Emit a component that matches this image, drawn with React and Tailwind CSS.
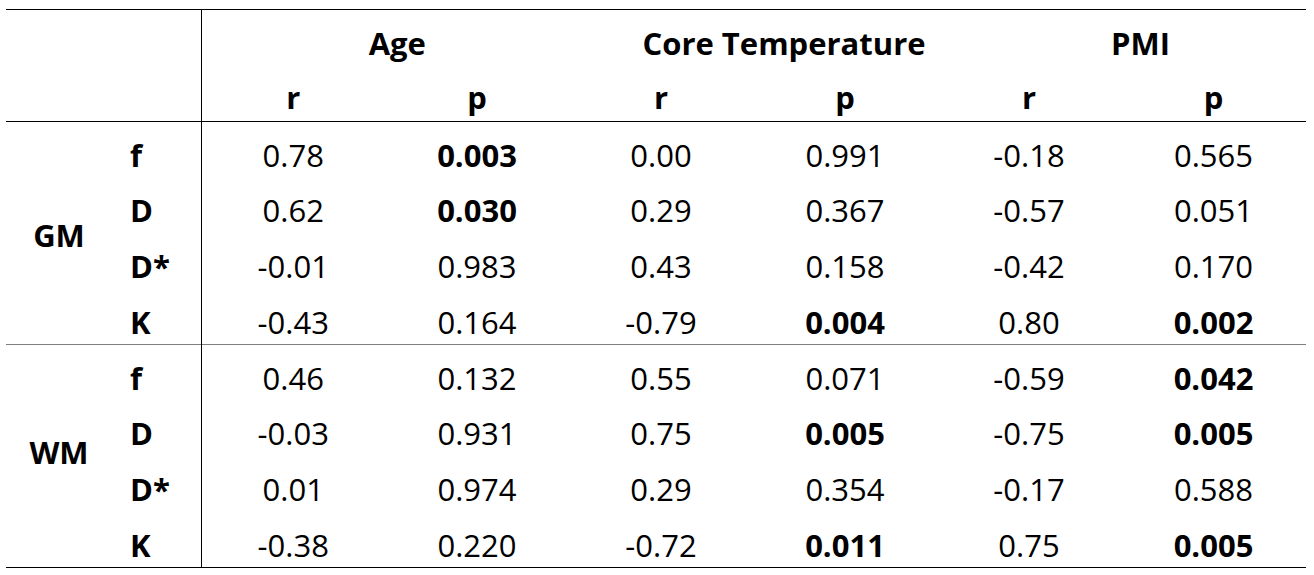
const groups = [
  {
    name: 'GM',
    rows: [
      { label: 'f', cells: [['0.78'], ['0.003', true], ['0.00'], ['0.991'], ['-0.18'], ['0.565']] },
      { label: 'D', cells: [['0.62'], ['0.030', true], ['0.29'], ['0.367'], ['-0.57'], ['0.051']] },
      { label: 'D*', cells: [['-0.01'], ['0.983'], ['0.43'], ['0.158'], ['-0.42'], ['0.170']] },
      { label: 'K', cells: [['-0.43'], ['0.164'], ['-0.79'], ['0.004', true], ['0.80'], ['0.002', true]] },
    ],
  },
  {
    name: 'WM',
    rows: [
      { label: 'f', cells: [['0.46'], ['0.132'], ['0.55'], ['0.071'], ['-0.59'], ['0.042', true]] },
      { label: 'D', cells: [['-0.03'], ['0.931'], ['0.75'], ['0.005', true], ['-0.75'], ['0.005', true]] },
      { label: 'D*', cells: [['0.01'], ['0.974'], ['0.29'], ['0.354'], ['-0.17'], ['0.588']] },
      { label: 'K', cells: [['-0.38'], ['0.220'], ['-0.72'], ['0.011', true], ['0.75'], ['0.005', true]] },
    ],
  },
]

export default function App() {
  return (
    <div className="w-[1314px] h-[575px] bg-white pt-[9px] pl-[6px] font-['Open_Sans','Liberation_Sans',sans-serif] text-black text-[31px] leading-[31px]">
      <table className="table-fixed border-collapse w-[1300px] border-t border-b border-black">
        <colgroup>
          <col className="w-[106px]" />
          <col className="w-[89px]" />
          <col className="w-[184px]" />
          <col className="w-[184px]" />
          <col className="w-[184px]" />
          <col className="w-[184px]" />
          <col className="w-[184px]" />
          <col className="w-[185px]" />
        </colgroup>
        <thead>
          <tr className="h-[56px]">
            <th colSpan={2} rowSpan={2} className="border-r border-b border-black p-0" />
            <th colSpan={2} className="p-0 pt-[18px] pl-[24px] align-top font-bold text-center">Age</th>
            <th colSpan={2} className="p-0 pt-[18px] pl-[62px] align-top font-bold text-center">Core Temperature</th>
            <th colSpan={2} className="p-0 pt-[18px] pl-[38px] align-top font-bold text-center">PMI</th>
          </tr>
          <tr className="h-[56px] border-b border-black">
            {['r', 'p', 'r', 'p', 'r', 'p'].map((h, i) => (
              <th key={i} className="p-0 pt-[16px] align-top font-bold text-center">{h}</th>
            ))}
          </tr>
        </thead>
        <tbody>
          {groups.map((g, gi) =>
            g.rows.map((row, ri) => (
              <tr
                key={g.name + ri}
                className={
                  'h-[55.75px] ' + (gi === 0 && ri === 3 ? 'border-b border-[#7f7f7f]' : '')
                }
              >
                {ri === 0 && (
                  <td
                    rowSpan={4}
                    className={
                      'p-0 align-middle text-center font-bold ' + (gi === 0 ? 'pt-[4px]' : 'pb-[8px]')
                    }
                  >
                    {g.name}
                  </td>
                )}
                <td className="p-0 pt-[18px] pl-[18px] align-top text-left font-bold border-r border-black">
                  {row.label}
                </td>
                {row.cells.map(([v, bold], ci) => (
                  <td
                    key={ci}
                    className={'p-0 pt-[18px] align-top text-center ' + (bold ? 'font-bold' : 'font-normal')}
                  >
                    {v}
                  </td>
                ))}
              </tr>
            ))
          )}
        </tbody>
      </table>
    </div>
  )
}
